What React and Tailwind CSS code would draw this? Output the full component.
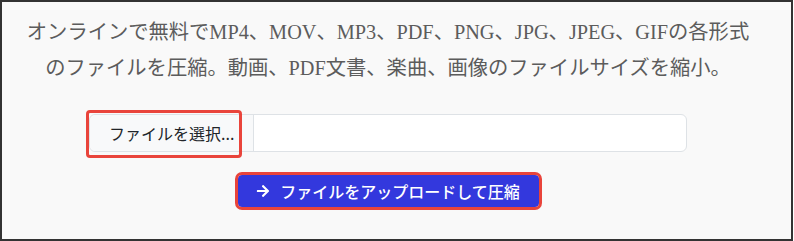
import React from "react";
import { FaArrowRight } from "react-icons/fa";

const App = () => {
  return (
    <div className="w-[794px] h-[241px] bg-white">
      <div className="w-[793px] h-[241px] border-2 border-[#333333] bg-[#f9f9f9] pl-[20px] pt-[12px]">
        <div className="w-[732px] flex flex-col items-center">
          {/* description */}
          <p
            className="w-[732px] text-center text-[20.3px] leading-[36px] text-[#5c5c5c]"
            style={{ fontFamily: '"Liberation Serif", "Noto Sans CJK JP", serif' }}
          >
            オンラインで無料でMP4、MOV、MP3、PDF、PNG、JPG、JPEG、GIFの各形式のファイルを圧縮。動画、PDF文書、楽曲、画像のファイルサイズを縮小。
          </p>

          {/* file input */}
          <div
            className="relative mt-[28px] flex w-[598px] h-[38px] border border-[#dee2e6] rounded-[6px] bg-white"
            style={{ fontFamily: '"Noto Sans CJK JP", "Noto Sans", sans-serif' }}
          >
            <div className="flex items-center px-[19px] bg-[#f8f9fa] border-r border-[#dee2e6] rounded-l-[6px] text-[16px] text-[#212529]">
              ファイルを選択...
            </div>
            <div className="flex-1"></div>
            <div className="absolute left-[-4px] top-[-5px] w-[156px] h-[48px] border-[3px] border-[#e9443b] rounded-[4px]"></div>
          </div>

          {/* upload button */}
          <button
            className="mt-[23px] flex items-center gap-[10px] h-[32px] w-[301px] justify-center bg-[#3338dd] text-white text-[16px] font-medium rounded-[4px] outline-[3px] outline-solid outline-[#e9443b]"
            style={{ fontFamily: '"Noto Sans CJK JP", "Noto Sans", sans-serif' }}
          >
            <FaArrowRight className="text-[14px]" />
            ファイルをアップロードして圧縮
          </button>
        </div>
      </div>
    </div>
  );
};

export default App;
